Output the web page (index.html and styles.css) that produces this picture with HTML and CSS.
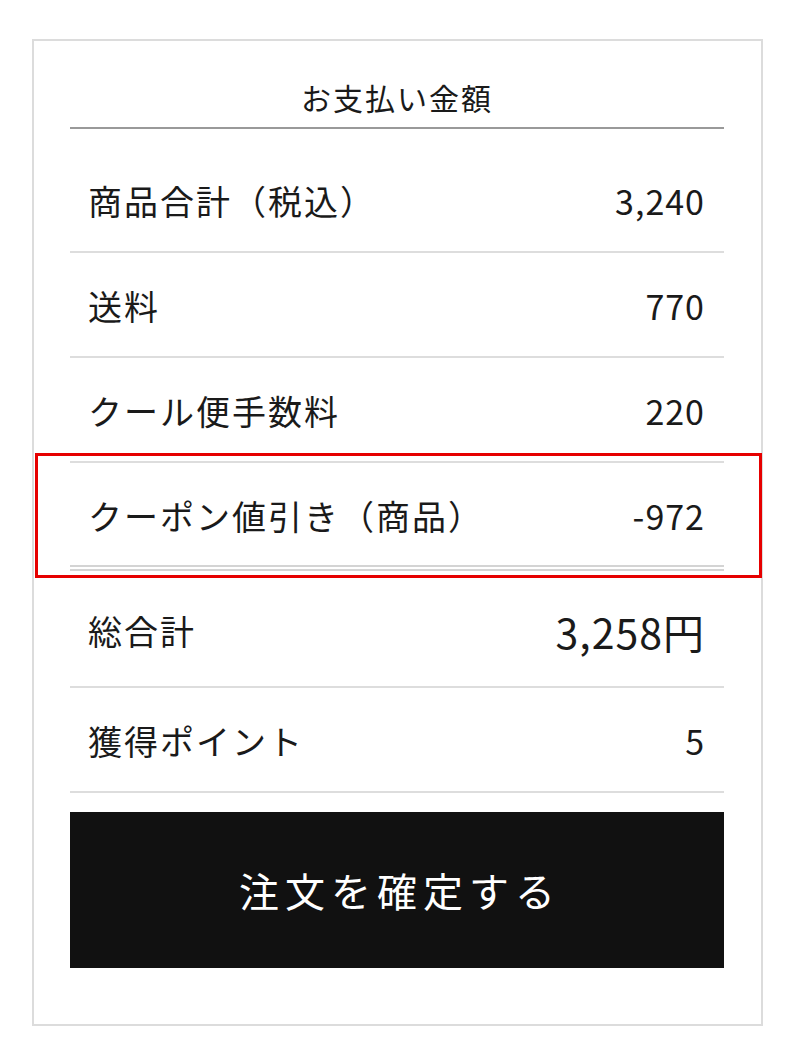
FILE: index.html
```html
<!DOCTYPE html>
<html lang="ja">
<head>
  <meta charset="UTF-8">
  <title>お支払い金額</title>
  <link rel="stylesheet" href="styles.css">
</head>
<body>
  <div class="payment-card">
    <div class="payment-header">お支払い金額</div>

    <div class="payment-list">
      <div class="payment-row">
        <span class="label">商品合計（税込）</span>
        <span class="value">3,240</span>
      </div>
      <div class="payment-row">
        <span class="label">送料</span>
        <span class="value">770</span>
      </div>
      <div class="payment-row">
        <span class="label">クール便手数料</span>
        <span class="value">220</span>
      </div>
      <div class="payment-row coupon">
        <span class="label">クーポン値引き（商品）</span>
        <span class="value">-972</span>
      </div>
      <div class="payment-row total">
        <span class="label">総合計</span>
        <span class="value">3,258円</span>
      </div>
      <div class="payment-row">
        <span class="label">獲得ポイント</span>
        <span class="value">5</span>
      </div>
    </div>

    <button class="confirm-btn">注文を確定する</button>

    <!-- 注目箇所の赤枠 -->
    <div class="highlight"></div>
  </div>
</body>
</html>
```

FILE: styles.css
```css
body {
  margin: 0;
  background: #fff;
  font-family: 'Noto Sans CJK JP', 'Noto Sans', sans-serif;
  color: #1a1a1a;
}

.payment-card {
  position: relative;
  box-sizing: border-box;
  width: 731px;
  height: 987px;
  margin: 39px 0 0 32px;
  padding: 0 37px 0 36px;
  border: 2px solid #dcdcdc;
  display: flex;
  flex-direction: column;
}

.payment-header {
  padding: 36px 0 10px;
  line-height: 40px;
  font-size: 30px;
  letter-spacing: 2px;
  text-align: center;
  border-bottom: 2px solid #999;
}

.payment-list {
  padding-top: 19px;
}

.payment-row {
  display: flex;
  align-items: center;
  justify-content: space-between;
  height: 105px;
  padding: 2px 19px 0 18px;
  box-sizing: border-box;
  border-bottom: 2px solid #ddd;
  font-size: 34px;
}

.payment-row .label {
  letter-spacing: 2px;
  white-space: nowrap;
}

.payment-row .value {
  letter-spacing: 1px;
}

.payment-row.coupon {
  height: 108px;
  border-bottom: 6px double #d4d4d4;
}

.payment-row.total {
  height: 117px;
  padding-top: 4px;
}

.payment-row.total .value {
  font-size: 41px;
  letter-spacing: 1px;
}

.confirm-btn {
  margin-top: 19px;
  height: 156px;
  border: none;
  background: #111;
  color: #fff;
  font-family: inherit;
  font-size: 40px;
  letter-spacing: 6px;
  padding: 0 0 0 6px;
}

.highlight {
  position: absolute;
  left: 1px;
  top: 412px;
  width: 727px;
  height: 125px;
  box-sizing: border-box;
  border: 3px solid #e60000;
}
```
